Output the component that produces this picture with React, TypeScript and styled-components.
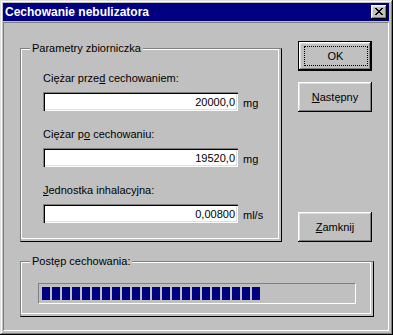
import React from 'react';
import styled, { createGlobalStyle } from 'styled-components';

const FONT = `"Liberation Sans", Arial, sans-serif`;

const Global = createGlobalStyle`
  html, body { margin: 0; padding: 0; background: #c0c0c0; }
  body { font-family: ${FONT}; font-size: 11px; color: #000; }
  * { box-sizing: border-box; }
`;

const Window = styled.div`
  width: 393px;
  height: 335px;
  background: #c0c0c0;
  display: flex;
  flex-direction: column;
  padding: 3px 4px 4px 3px;
  box-shadow: inset -1px -1px #000, inset 1px 1px #dfdfdf, inset -2px -2px #808080, inset 2px 2px #fff;
`;

const TitleBar = styled.div`
  height: 18px;
  flex: none;
  background: #000080;
  color: #fff;
  display: flex;
  align-items: center;
  justify-content: space-between;
  padding: 0 2px 0 2px;
`;

const Title = styled.span`
  font-family: ${FONT};
  font-weight: bold;
  font-size: 12px;
  line-height: 18px;
`;

const CloseButton = styled.button`
  width: 16px;
  height: 14px;
  padding: 0;
  border: none;
  background: #c0c0c0;
  display: flex;
  align-items: center;
  justify-content: center;
  box-shadow: inset -1px -1px #000, inset 1px 1px #fff, inset -2px -2px #808080, inset 2px 2px #dfdfdf;
  svg { display: block; margin: 0 1px 1px 0; }
`;

const Client = styled.div`
  flex: 1;
  margin-top: 1px;
  border-style: solid;
  border-width: 1px;
  border-color: #808080 #fff #fff #808080;
  display: flex;
  flex-direction: column;
  padding-left: 16px;
`;

const TopRow = styled.div`
  display: flex;
  align-items: stretch;
  gap: 16px;
`;

const GroupFrame = styled.div<{ $w: number; $top: number }>`
  position: relative;
  width: ${p => p.$w}px;
  margin-top: ${p => p.$top}px;
  border-style: solid;
  border-width: 1px;
  border-color: #808080 #000 #000 #808080;
  padding: 0 2px 2px 0;
  display: flex;
`;

const GroupInner = styled.div<{ $pad: string }>`
  flex: 1;
  border: 1px solid #fff;
  padding: ${p => p.$pad};
  display: flex;
  flex-direction: column;
`;

const GroupTitle = styled.span`
  position: absolute;
  top: -7px;
  left: 9px;
  padding: 0 2px;
  background: #c0c0c0;
  font-size: 11px;
  line-height: 13px;
  white-space: nowrap;
`;

const Fields = styled.div`
  display: flex;
  flex-direction: column;
  gap: 17px;
`;

const Field = styled.div`
  display: flex;
  flex-direction: column;
  gap: 7px;
`;

const Label = styled.label`
  font-size: 11px;
  line-height: 13px;
  height: 13px;
  white-space: nowrap;
`;

const InputRow = styled.div`
  display: flex;
  align-items: center;
  gap: 5px;
`;

const TextBox = styled.input`
  width: 195px;
  height: 19px;
  border: none;
  outline: none;
  margin: 0;
  padding: 0 3px 0 4px;
  background: #fff;
  font-family: ${FONT};
  font-size: 11px;
  color: #000;
  text-align: right;
  box-shadow: inset 1px 1px #808080, inset 2px 2px #000, inset -1px -1px #fff, inset -2px -2px #dfdfdf;
`;

const Unit = styled.span`
  font-size: 11px;
  line-height: 13px;
  margin-top: 3px;
`;

const ButtonColumn = styled.div`
  width: 74px;
  margin-top: 18px;
  display: flex;
  flex-direction: column;
  gap: 11px;
`;

const Button = styled.button<{ $default?: boolean; $bottom?: boolean }>`
  width: 74px;
  height: 30px;
  padding: 0;
  margin: 0;
  margin-top: ${p => (p.$bottom ? 'auto' : '0')};
  border: none;
  background: #c0c0c0;
  color: #000;
  font-family: ${FONT};
  font-size: 11px;
  display: flex;
  align-items: center;
  justify-content: center;
  box-shadow: ${p =>
    p.$default
      ? 'inset 0 0 0 1px #000, inset -2px -2px #000, inset 2px 2px #fff, inset -3px -3px #808080, inset 3px 3px #dfdfdf'
      : 'inset -1px -1px #000, inset 1px 1px #fff, inset -2px -2px #808080, inset 2px 2px #dfdfdf'};
`;

const FocusRing = styled.span`
  width: 64px;
  height: 20px;
  margin-left: 1px;
  border: 1px dotted #000;
  display: flex;
  align-items: center;
  justify-content: center;
`;

const ProgressSection = styled.div`
  margin-top: 19px;
  display: flex;
`;

const ProgressTrack = styled.div`
  width: 318px;
  height: 21px;
  border-style: solid;
  border-width: 1px;
  border-color: #808080 #fff #fff #808080;
  padding: 3px;
  display: flex;
  gap: 2px;
`;

const Block = styled.div`
  width: 8px;
  height: 13px;
  background: #000080;
  flex: none;
`;

const CloseGlyph = () => (
  <svg width="8" height="7" viewBox="0 0 8 7" shapeRendering="crispEdges">
    <path
      fill="#000"
      d="M0 0h2v1H0zM6 0h2v1H6zM1 1h2v1H1zM5 1h2v1H5zM2 2h4v1H2zM3 3h2v1H3zM2 4h4v1H2zM1 5h2v1H1zM5 5h2v1H5zM0 6h2v1H0zM6 6h2v1H6z"
    />
  </svg>
);

const fields = [
  { label: <>Ciężar prze<u>d</u> cechowaniem:</>, value: '20000,0', unit: 'mg' },
  { label: <>Ciężar p<u>o</u> cechowaniu:</>, value: '19520,0', unit: 'mg' },
  { label: <><u>J</u>ednostka inhalacyjna:</>, value: '0,00800', unit: 'ml/s' },
];

export default function App() {
  return (
    <>
      <Global />
      <Window>
        <TitleBar>
          <Title>Cechowanie nebulizatora</Title>
          <CloseButton aria-label="Zamknij">
            <CloseGlyph />
          </CloseButton>
        </TitleBar>
        <Client>
          <TopRow>
            <GroupFrame $w={262} $top={25}>
              <GroupTitle>Parametry zbiorniczka</GroupTitle>
              <GroupInner $pad="22px 0 15px 21px">
                <Fields>
                  {fields.map((f, i) => (
                    <Field key={i}>
                      <Label>{f.label}</Label>
                      <InputRow>
                        <TextBox readOnly value={f.value} />
                        <Unit>{f.unit}</Unit>
                      </InputRow>
                    </Field>
                  ))}
                </Fields>
              </GroupInner>
            </GroupFrame>
            <ButtonColumn>
              <Button $default>
                <FocusRing>OK</FocusRing>
              </Button>
              <Button>
                <span><u>N</u>astępny</span>
              </Button>
              <Button $bottom>
                <span><u>Z</u>amknij</span>
              </Button>
            </ButtonColumn>
          </TopRow>
          <ProgressSection>
            <GroupFrame $w={354} $top={0}>
              <GroupTitle>Postęp cechowania:</GroupTitle>
              <GroupInner $pad="20px 0 9px 16px">
                <ProgressTrack>
                  {Array.from({ length: 22 }, (_, i) => (
                    <Block key={i} />
                  ))}
                </ProgressTrack>
              </GroupInner>
            </GroupFrame>
          </ProgressSection>
        </Client>
      </Window>
    </>
  );
}
